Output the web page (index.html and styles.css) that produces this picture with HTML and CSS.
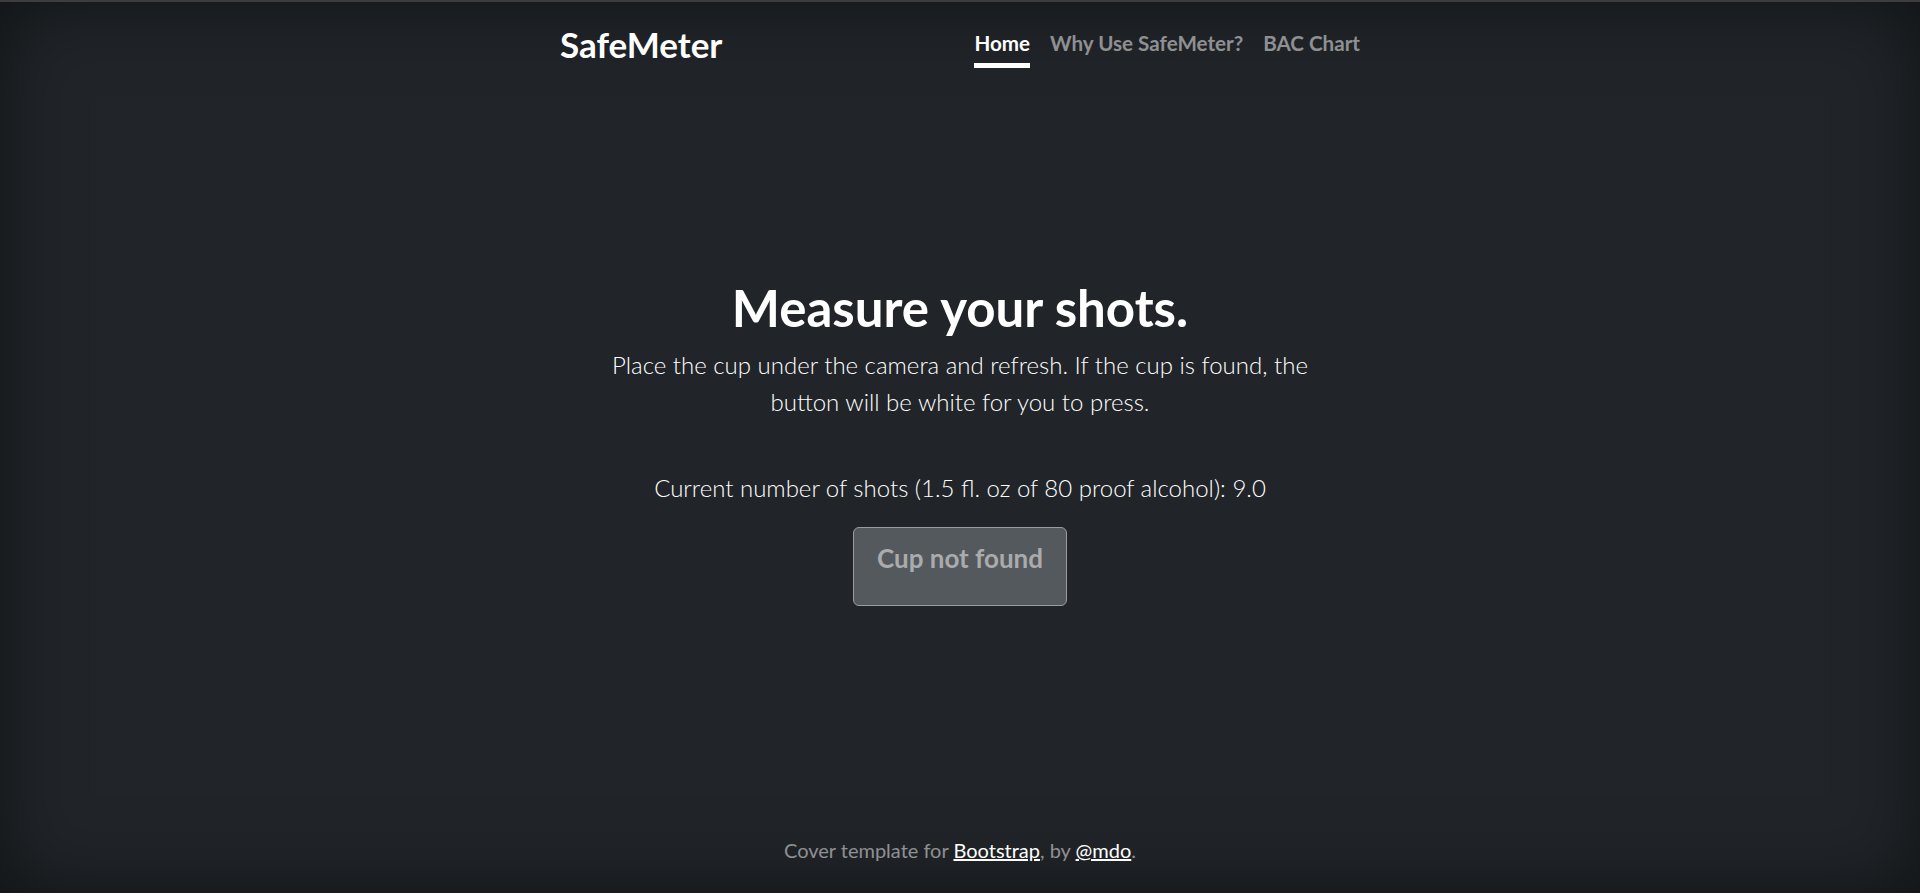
FILE: index.html
```html
<!DOCTYPE html>
<html lang="en">
<head>
  <meta charset="UTF-8" />
  <meta name="viewport" content="width=device-width, initial-scale=1.0" />
  <title>SafeMeter</title>
  <link rel="stylesheet" href="styles.css">
</head>
<body>
  <header class="masthead">
    <h3 class="brand">SafeMeter</h3>
    <nav class="nav">
      <a class="nav-link active" href="#">Home</a>
      <a class="nav-link" href="#">Why Use SafeMeter?</a>
      <a class="nav-link" href="#">BAC Chart</a>
    </nav>
  </header>

  <main class="cover">
    <h1>Measure your shots.</h1>
    <p class="lead">Place the cup under the camera and refresh. If the cup is found, the button will be white for you to press.</p>
    <p class="shots">Current number of shots (1.5 fl. oz of 80 proof alcohol): 9.0</p>
    <button class="cup-btn" disabled>Cup not found</button>
  </main>

  <footer class="mastfoot">
    <p>Cover template for <a href="#">Bootstrap</a>, by <a href="#">@mdo</a>.</p>
  </footer>
</body>
</html>
```

FILE: styles.css
```css
html, body {
  height: 100%;
}
body {
  margin: 0;
  box-sizing: border-box;
  border-top: 2px solid #3d3d3d;
  display: flex;
  flex-direction: column;
  background-color: #212529;
  box-shadow: inset 0 0 5rem rgba(0, 0, 0, .5);
  color: #fff;
  font-family: Lato, "Liberation Sans", sans-serif;
}
.masthead {
  width: 800px;
  margin: 0 auto;
  padding-top: 21px;
  display: flex;
  justify-content: space-between;
  align-items: flex-start;
}
.brand {
  margin: 0;
  font-size: 35px;
  font-weight: 700;
  line-height: 1.2;
}
.nav {
  display: flex;
  margin-top: 2px;
}
.nav-link {
  padding: 4px 0;
  margin-left: 20px;
  font-size: 20.6px;
  font-weight: 700;
  line-height: 1.45;
  color: rgba(255, 255, 255, .5);
  text-decoration: none;
  border-bottom: 5px solid transparent;
}
.nav-link:first-child {
  margin-left: 0;
}
.nav-link.active {
  color: #fff;
  border-bottom-color: #fff;
}
.cover {
  flex: 1;
  text-align: center;
  padding-top: 209px;
}
.cover h1 {
  margin: 0 0 8px;
  font-size: 51px;
  font-weight: 700;
  line-height: 1.2;
}
.lead {
  width: 760px;
  margin: 0 auto;
  font-size: 24px;
  font-weight: 300;
  line-height: 1.55;
}
.shots {
  margin: 50px 0 21px;
  font-size: 24px;
  font-weight: 300;
  line-height: 1.5;
}
.cup-btn {
  box-sizing: border-box;
  width: 214px;
  height: 79px;
  padding: 0 18px 18px;
  font-family: inherit;
  font-size: 26px;
  font-weight: 700;
  color: #a9abad;
  background-color: #54595e;
  border: 1px solid #9a9da0;
  border-radius: 6px;
}
.mastfoot {
  text-align: center;
  padding-bottom: 28px;
  color: rgba(255, 255, 255, .5);
  font-size: 20px;
  line-height: 1.5;
}
.mastfoot p {
  margin: 0;
}
.mastfoot a {
  color: #fff;
}
```
